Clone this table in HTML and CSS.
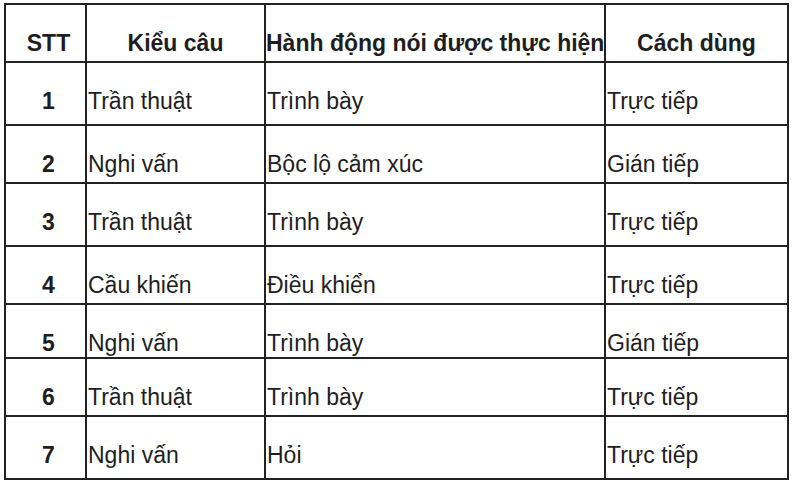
FILE: index.html
```html
<!DOCTYPE html>
<html lang="vi">
<head>
<meta charset="utf-8">
<title>Bảng kiểu câu</title>
<link rel="stylesheet" href="styles.css">
</head>
<body>
<table class="grid">
  <colgroup>
    <col class="c1"><col class="c2"><col class="c3"><col class="c4">
  </colgroup>
  <thead>
    <tr class="h58">
      <th class="num">STT</th>
      <th>Kiểu câu</th>
      <th>Hành động nói được thực hiện</th>
      <th>Cách dùng</th>
    </tr>
  </thead>
  <tbody>
    <tr class="h63"><td class="num">1</td><td>Trần thuật</td><td>Trình bày</td><td>Trực tiếp</td></tr>
    <tr class="h58"><td class="num">2</td><td>Nghi vấn</td><td>Bộc lộ cảm xúc</td><td>Gián tiếp</td></tr>
    <tr class="h63"><td class="num">3</td><td>Trần thuật</td><td>Trình bày</td><td>Trực tiếp</td></tr>
    <tr class="h58"><td class="num">4</td><td>Cầu khiến</td><td>Điều khiển</td><td>Trực tiếp</td></tr>
    <tr class="h54"><td class="num">5</td><td>Nghi vấn</td><td>Trình bày</td><td>Gián tiếp</td></tr>
    <tr class="h58"><td class="num">6</td><td>Trần thuật</td><td>Trình bày</td><td>Trực tiếp</td></tr>
    <tr class="h63"><td class="num">7</td><td>Nghi vấn</td><td>Hỏi</td><td>Trực tiếp</td></tr>
  </tbody>
</table>
</body>
</html>
```
FILE: styles.css
```css
html, body {
  margin: 0;
  padding: 0;
  background: #ffffff;
}
body {
  font-family: "Liberation Sans", Arial, sans-serif;
  color: #1e1e1e;
}
.grid {
  border-collapse: collapse;
  table-layout: fixed;
  width: 785px;
  margin: 3px 0 0 4px;
}
.c1 { width: 81px; }
.c2 { width: 179px; }
.c3 { width: 340px; }
.c4 { width: 183px; }
.grid th,
.grid td {
  border: 2px solid #222222;
  font-size: 23px;
  line-height: 26px;
  padding: 25px 0 0 1px;
  vertical-align: top;
  white-space: nowrap;
  overflow: hidden;
  text-align: left;
  box-sizing: border-box;
}
.grid th {
  font-weight: bold;
  text-align: center;
  padding-left: 0;
}
.grid .num {
  font-weight: bold;
  text-align: center;
  padding-left: 6px;
}
.h58 th, .h58 td { height: 58px; }
.h63 td { height: 63px; }
.h54 td { height: 54px; }
```
